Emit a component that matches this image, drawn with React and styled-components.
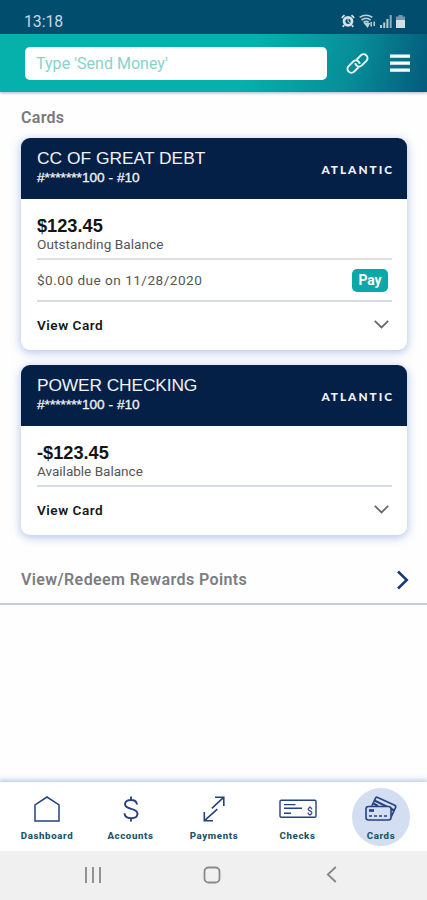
import React, { useState } from 'react';
import styled, { createGlobalStyle } from 'styled-components';

const GlobalStyle = createGlobalStyle`
  * {
    box-sizing: border-box;
  }
  body {
    margin: 0;
    background: #fff;
    font-family: Roboto, 'Liberation Sans', sans-serif;
  }
`;

const Screen = styled.div`
  width: 427px;
  height: 900px;
  display: flex;
  flex-direction: column;
  overflow: hidden;
  background: #fefefe;
`;

const StatusBar = styled.div`
  height: 34px;
  flex-shrink: 0;
  display: flex;
  align-items: center;
  justify-content: space-between;
  padding: 9px 22px 0 24px;
  background: #004d6e;
  color: #c9dae3;
  font-size: 15.8px;
  letter-spacing: -0.05px;
`;

const StatusIcons = styled.div`
  display: flex;
  align-items: center;
  gap: 4px;
  padding-bottom: 1px;
`;

const Header = styled.header`
  height: 58px;
  flex-shrink: 0;
  display: flex;
  align-items: center;
  padding: 0 17px 0 25px;
  background: radial-gradient(circle at 20% -60%, #06b1ac 0%, #06b0ac 50%, #078d98 78%, #045a7b 100%);
  box-shadow: 0 1px 3px rgba(0, 40, 60, 0.35);
`;

const SearchInput = styled.input`
  width: 302px;
  height: 33px;
  padding: 0 11px;
  border: none;
  outline: none;
  border-radius: 5px;
  background: white;
  font-family: inherit;
  font-size: 16px;
  letter-spacing: 0.03px;

  &::placeholder {
    color: #86d3ca;
    opacity: 1;
  }
`;

const IconButton = styled.button`
  display: flex;
  padding: 0;
  margin-left: ${(props) => props.$gap}px;
  border: none;
  background: none;
  cursor: pointer;
`;

const Content = styled.main`
  flex: 1;
`;

const Title = styled.h1`
  margin: 16px 0 0 21px;
  height: 20px;
  line-height: 20px;
  font-size: 16px;
  font-weight: 600;
  letter-spacing: 0.3px;
  color: #77797c;
`;

const CardBlock = styled.section`
  width: 386px;
  margin: ${(props) => props.$top}px 0 0 21px;
  border-radius: 9px;
  overflow: hidden;
  background: white;
  box-shadow: 0 2px 8px 1px rgba(120, 150, 215, 0.5);
`;

const CardHead = styled.div`
  height: 61px;
  display: flex;
  align-items: center;
  justify-content: space-between;
  padding: 0 13px 0 16px;
  background: #042047;
  color: #f1f3f7;
  font-family: 'Liberation Sans', Arial, sans-serif;
`;

const CardName = styled.div`
  font-size: 17.4px;
  line-height: 19px;
  letter-spacing: ${(props) => props.$spacing}px;
  white-space: nowrap;
`;

const CardNumber = styled.div`
  font-size: 13.7px;
  line-height: 20px;
  -webkit-text-stroke: 0.3px #f1f3f7;
`;

const Brand = styled.div`
  margin-top: 1px;
  font-family: Lato, sans-serif;
  font-size: 11.8px;
  font-weight: 900;
  letter-spacing: 2px;
`;

const CardBody = styled.div`
  padding: 0 15px 0 16px;
`;

const Balance = styled.div`
  height: 61px;
  padding-top: 17px;
  border-bottom: 2px solid ${(props) => props.$line};
`;

const Amount = styled.div`
  font-family: 'Liberation Sans', Arial, sans-serif;
  font-size: 18.2px;
  font-weight: 700;
  line-height: 20px;
  color: #141414;
`;

const Label = styled.div`
  font-size: 13.6px;
  line-height: 16px;
  letter-spacing: ${(props) => props.$spacing}px;
  color: #555;
`;

const DueRow = styled.div`
  height: 42px;
  display: flex;
  align-items: center;
  justify-content: space-between;
  padding-right: 4px;
  border-bottom: 2px solid #d9dcdf;
`;

const PayButton = styled.button`
  width: 36px;
  height: 23px;
  padding: 0;
  border: none;
  border-radius: 5px;
  background: #0aa9a5;
  color: white;
  font-family: inherit;
  font-size: 13.8px;
  font-weight: 700;
  cursor: pointer;
`;

const ViewRow = styled.div`
  height: 48px;
  display: flex;
  align-items: center;
  justify-content: space-between;
  padding: 0 3px 2px 0;
  font-size: 13.6px;
  font-weight: 600;
  letter-spacing: 0.5px;
  color: #161616;
`;

const RewardsRow = styled.div`
  height: 50px;
  margin-top: 20px;
  display: flex;
  align-items: center;
  justify-content: space-between;
  padding: 1px 18px 0 21px;
  border-bottom: 2px solid #c3ced9;
  font-size: 16px;
  font-weight: 600;
  letter-spacing: 0.4px;
  color: #7b7d80;
`;

const TabBar = styled.nav`
  height: 69px;
  flex-shrink: 0;
  display: flex;
  align-items: center;
  justify-content: space-between;
  padding: 0 17px 0 18px;
  background: white;
  box-shadow: 0 -1px 5px 1px rgba(150, 175, 225, 0.7);
`;

const Tab = styled.button`
  width: 58px;
  height: 58px;
  display: flex;
  flex-direction: column;
  align-items: center;
  padding: 8px 0 0;
  border: none;
  border-radius: 50%;
  background: ${(props) => (props.$active ? '#d3def2' : 'transparent')};
  color: #1b5366;
  font-family: inherit;
  font-size: 9.7px;
  font-weight: 800;
  letter-spacing: 0.62px;
  cursor: pointer;

  svg {
    flex-shrink: 0;
    margin-bottom: 8px;
  }
`;

const SystemBar = styled.div`
  height: 49px;
  flex-shrink: 0;
  display: flex;
  align-items: center;
  justify-content: space-between;
  padding: 0 90px 2px 84px;
  background: #f0f0f0;
`;

const ink = '#25417f';

const AlarmIcon = () => (
  <svg width="14" height="14" viewBox="0 0 14 14" fill="none" stroke="#d5e2e9">
    <circle cx="7" cy="7.3" r="4" strokeWidth="2.8" />
    <path d="M7 4.8v2.8l1.8 1" strokeWidth="1" />
    <path d="M.8 3.8 3.5 1.2M13.2 3.8l-2.7-2.6M3.3 11.2l-1.6 1.7M10.7 11.2l1.6 1.7" strokeWidth="1.7" />
  </svg>
);

const WifiIcon = () => (
  <svg width="17" height="14" viewBox="0 0 17 14" fill="none" stroke="#bdd0da" strokeWidth="1.6">
    <path d="M.6 3.4c4.2-2.9 8.6-2.9 12.8 0M2.6 6c3-2.3 6-2.3 9 0M4.6 8.4c2-1.5 3.5-1.5 5 0" />
    <path d="M6 9.5 8.5 12.5 10 9.8z" fill="#bdd0da" />
    <path d="M12.2 8v4.5M15.2 12V7.5" strokeWidth="1.5" />
  </svg>
);

const SignalIcon = () => (
  <svg width="12" height="13" viewBox="0 0 12 13">
    <path d="M0 10h2v3H0zM3.2 7.5h2V13h-2z" fill="#b5cad5" />
    <path d="M6.4 4h2v9h-2z" fill="#b5cad5" />
    <path d="M9.7 0h2v13h-2z" fill="#8fafbf" />
  </svg>
);

const BatteryIcon = () => (
  <svg width="9" height="13" viewBox="0 0 9 13">
    <path d="M2.5 0h4v1.6H9V5H0V1.6h2.5z" fill="#7597a9" />
    <path d="M0 5h9v8H0z" fill="#d3e0e6" />
  </svg>
);

const LinkIcon = () => (
  <svg width="23" height="23" viewBox="0 0 23 23" fill="none" stroke="#e9f6f6" strokeWidth="2">
    <g transform="rotate(-45 11.5 11.5)">
      <path d="M9.5 14.9H3.4a3.9 3.9 0 0 1 0-7.8h6.3a3.9 3.9 0 0 1 3.9 3.9c0 1-.3 1.700-.8 2.300" />
      <path d="M13.5 8.1h6.100a3.9 3.9 0 0 1 0 7.8h-6.300a3.9 3.9 0 0 1-3.9-3.9c0-1 .3-1.700.8-2.300" />
    </g>
  </svg>
);

const MenuIcon = () => (
  <svg width="20" height="18" viewBox="0 0 20 18" fill="white">
    <path d="M0 .5h20v3.3H0zM0 7.5h20v3.3H0zM0 14.5h20v3.3H0z" />
  </svg>
);

const ChevronDown = () => (
  <svg width="15" height="10" viewBox="0 0 15 10" fill="none" stroke="#66686c" strokeWidth="1.8">
    <path d="M.8.8 7.5 7.5l6.7-6.7" />
  </svg>
);

const ChevronRight = () => (
  <svg width="13" height="20" viewBox="0 0 13 20" fill="none" stroke="#173a75" strokeWidth="2.5">
    <path d="M2 1.5 10.8 10 2 18.5" />
  </svg>
);

const HomeIcon = () => (
  <svg width="26" height="26" viewBox="0 0 26 26" fill="none" stroke={ink} strokeWidth="1.5">
    <path d="M1 25V8.8L13 1l12 7.8V25z" />
  </svg>
);

const DollarIcon = () => (
  <svg width="26" height="26" viewBox="0 0 26 26" fill="none" stroke={ink} strokeWidth="1.9">
    <path d="M19 8.5C18.7 5.7 16.5 4 13 4S7 5.6 7 8.3c0 6 12.5 3 12.5 9.4 0 2.9-2.7 4.5-6.3 4.5-4 0-6.5-1.8-6.7-5M13 .5V4M13 22.2v3.3" />
  </svg>
);

const ArrowsIcon = () => (
  <svg width="26" height="26" viewBox="0 0 26 26" fill="none" stroke={ink} strokeWidth="1.6">
    <path d="M14 1.2h8.8V10M22.6 1.4 10.8 12.3M3.3 16v8.8H12M3.5 24.6 16.3 13.2" />
  </svg>
);

const CheckIcon = () => (
  <svg width="38" height="26" viewBox="0 0 38 26" fill="none" stroke={ink}>
    <rect x="1" y="4.3" width="36" height="17" rx="1.2" strokeWidth="1.4" />
    <path d="M5 8.6h11.5M5 12.2h18M5 17.3h7" strokeWidth="1.4" />
    <text x="28" y="19.3" fill={ink} stroke="none" fontSize="10" fontWeight="500" letterSpacing="0">
      $
    </text>
  </svg>
);

const CardsIcon = () => (
  <svg width="34" height="26" viewBox="0 0 34 26" fill="none" stroke={ink} strokeWidth="1.6">
    <path d="M7.8 10 11.4 2.3c.5-1.1 1.2-1.4 2.3-.9l17 7.9c1.1.5 1.3 1.2.8 2.3l-4.3 9.2" />
    <path d="M10.5 4.5 30 14.2M9.3 7.5 14 10M21 10l8 4.5" strokeWidth="2" />
    <rect x="2" y="10.5" width="25" height="13.5" rx="2.5" fill="#d3def2" />
    <path d="M5 14.5h5" strokeWidth="2.6" />
    <path d="M5 20h19" strokeWidth="1.5" strokeDasharray="3 2" />
  </svg>
);

const tabs = [
  { name: 'Dashboard', Icon: HomeIcon },
  { name: 'Accounts', Icon: DollarIcon },
  { name: 'Payments', Icon: ArrowsIcon },
  { name: 'Checks', Icon: CheckIcon },
  { name: 'Cards', Icon: CardsIcon },
];

const Card = ({ name, amount, label, nameSpacing, spacing, due, top }) => (
  <CardBlock $top={top}>
    <CardHead>
      <div>
        <CardName $spacing={nameSpacing}>{name}</CardName>
        <CardNumber>#*******100 - #10</CardNumber>
      </div>
      <Brand>ATLANTIC</Brand>
    </CardHead>
    <CardBody>
      <Balance $line={due ? '#dedfe1' : '#d5dde7'}>
        <Amount>{amount}</Amount>
        <Label $spacing={spacing}>{label}</Label>
      </Balance>
      {due && (
        <DueRow>
          <Label $spacing={0.48}>{due}</Label>
          <PayButton>Pay</PayButton>
        </DueRow>
      )}
      <ViewRow>
        View Card
        <ChevronDown />
      </ViewRow>
    </CardBody>
  </CardBlock>
);

const App = () => {
  const [value, setValue] = useState('');
  const [active, setActive] = useState('Cards');

  return (
    <>
      <GlobalStyle />
      <Screen>
        <StatusBar>
          <span>13:18</span>
          <StatusIcons>
            <AlarmIcon />
            <WifiIcon />
            <SignalIcon />
            <BatteryIcon />
          </StatusIcons>
        </StatusBar>
        <Header>
          <SearchInput
            value={value}
            onChange={(e) => setValue(e.target.value)}
            placeholder="Type 'Send Money'"
          />
          <IconButton $gap={19} aria-label="Link">
            <LinkIcon />
          </IconButton>
          <IconButton $gap={21} aria-label="Menu">
            <MenuIcon />
          </IconButton>
        </Header>
        <Content>
          <Title>Cards</Title>
          <Card
            top={10}
            name="CC OF GREAT DEBT"
            nameSpacing={0}
            amount="$123.45"
            label="Outstanding Balance"
            spacing={0.05}
            due="$0.00 due on 11/28/2020"
          />
          <Card
            top={15}
            name="POWER CHECKING"
            nameSpacing={-0.15}
            amount="-$123.45"
            label="Available Balance"
            spacing={-0.03}
          />
          <RewardsRow>
            View/Redeem Rewards Points
            <ChevronRight />
          </RewardsRow>
        </Content>
        <TabBar>
          {tabs.map(({ name, Icon }) => (
            <Tab key={name} $active={name === active} onClick={() => setActive(name)}>
              <Icon />
              {name}
            </Tab>
          ))}
        </TabBar>
        <SystemBar>
          <svg width="18" height="18" viewBox="0 0 18 18" stroke="#929292" strokeWidth="2">
            <path d="M2 1v16M9 1v16M16 1v16" />
          </svg>
          <svg width="22" height="18" viewBox="0 0 22 18" fill="none" stroke="#898989" strokeWidth="1.8">
            <rect x="1.5" y="1.5" width="15" height="15" rx="4" />
          </svg>
          <svg width="11" height="17" viewBox="0 0 11 17" fill="none" stroke="#858585" strokeWidth="1.8">
            <path d="M9.8 1 1.8 8.5l8 7.500" />
          </svg>
        </SystemBar>
      </Screen>
    </>
  );
};

export default App;
